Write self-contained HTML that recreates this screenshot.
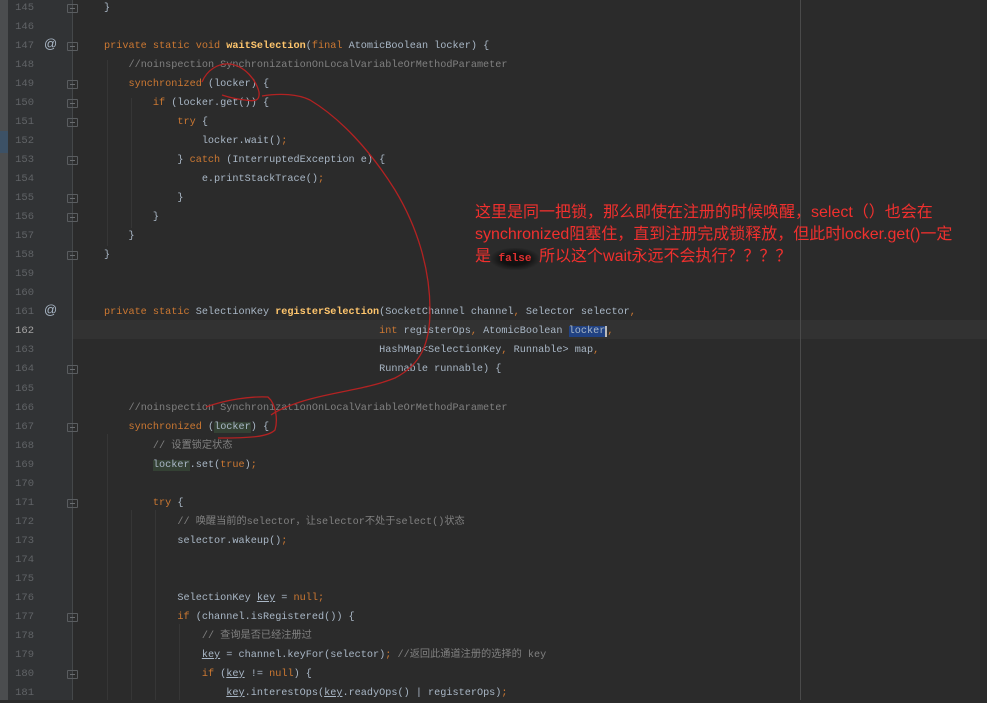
<!DOCTYPE html>
<html><head><meta charset="utf-8"><style>
body{margin:0;width:987px;height:700px;overflow:hidden;background:#2b2b2b;position:relative;font-family:"Liberation Mono","Noto Sans CJK SC",monospace;}
.strip{position:absolute;left:0;top:0;width:8px;height:700px;background:#4b4d4f}
.gut{position:absolute;left:8px;top:0;width:65px;height:700px;background:#313335}
.cur{position:absolute;left:73px;top:320px;width:914px;height:19px;background:#323232}
.margin{position:absolute;left:800px;top:0;width:1px;height:700px;background:#4a4a4a}
.ln{position:absolute;left:8px;width:26px;text-align:right;font-size:10.5px;color:#606366;height:19px;line-height:19px}
.code{position:absolute;left:104px;white-space:pre;font-size:10.2px;color:#a9b7c6;height:19px;line-height:19px}
.k{color:#cc7832}.c{color:#808080}.f{color:#ffc66d;font-weight:bold}.u{text-decoration:underline}
.hl{background:#344134}.sel{background:#214283;border-right:2px solid #bbb}
.fold{position:absolute;left:67px;width:11px;height:9px;border:1px solid #5a5d60;box-sizing:border-box;border-radius:1px}
.fold:after{content:"";position:absolute;left:2px;top:3px;width:5px;height:1px;background:#6a6d70}
.vl{position:absolute;left:72px;top:0;width:1px;height:700px;background:#45484a}
.at{position:absolute;left:44px;color:#a9b7c6;font-size:13px;font-family:"Liberation Sans",sans-serif}
.note{position:absolute;left:475px;color:#f0302e;font-family:"Liberation Sans","Noto Sans CJK SC",sans-serif;font-size:16px;line-height:22px;white-space:nowrap}
.ig{position:absolute;width:1px;background:#363636}
</style></head><body>
<div class="strip"></div><div style="position:absolute;left:0;top:131px;width:8px;height:22px;background:#3c5166"></div>
<div class="gut"></div><div class="vl"></div>
<div class="cur"></div>
<div class="margin"></div>
<div class="ig" style="left:107px;top:60px;height:186px"></div>
<div class="ig" style="left:131px;top:98px;height:130px"></div>
<div class="ig" style="left:107px;top:434px;height:266px"></div>
<div class="ig" style="left:131px;top:510px;height:190px"></div>
<div class="ig" style="left:155px;top:510px;height:190px"></div>
<div class="ig" style="left:179px;top:624px;height:76px"></div>
<div id="L"></div>
<div class="note" style="top:202px">这里是同一把锁，那么即使在注册的时候唤醒，select（）也会在</div>
<div class="note" style="top:224px">synchronized阻塞住，直到注册完成锁释放，但此时locker.get()一定</div>
<div class="note" style="top:246px">是<span style="display:inline-block;width:48px;background:radial-gradient(#111 40%,transparent 75%);font-family:'Liberation Mono';font-size:11px;font-weight:bold;color:#e03030;text-align:center">false</span>所以这个wait永远不会执行？？？？</div>
<svg style="position:absolute;left:0;top:0" width="987" height="700" fill="none" stroke="#b32222" stroke-width="1.3">
<path d="M202 82 C207 70 218 63 230 64 C245 66 256 80 259 92 C260 100 256 102 245 100 C235 99 228 97 222 95"/>
<path d="M262 96 C280 93 298 94 310 100 C340 118 370 150 395 190 C418 228 430 270 430 310 C430 345 420 365 395 378 C365 390 330 392 300 402 C288 406 278 410 271 415"/>
<path d="M206 407 C225 400 250 396 268 397 C276 404 278 420 275 430 C268 437 250 438 218 438"/>
</svg>
<script>
const lines={
145:'}',
146:'',
147:'<span class="k">private static void </span><span class="f">waitSelection</span>(<span class="k">final </span>AtomicBoolean locker) {',
148:'    <span class="c">//noinspection SynchronizationOnLocalVariableOrMethodParameter</span>',
149:'    <span class="k">synchronized </span>(locker) {',
150:'        <span class="k">if </span>(locker.get()) {',
151:'            <span class="k">try </span>{',
152:'                locker.wait()<span class="k">;</span>',
153:'            } <span class="k">catch </span>(InterruptedException e) {',
154:'                e.printStackTrace()<span class="k">;</span>',
155:'            }',
156:'        }',
157:'    }',
158:'}',
159:'',160:'',
161:'<span class="k">private static </span>SelectionKey <span class="f">registerSelection</span>(SocketChannel channel<span class="k">, </span>Selector selector<span class="k">,</span>',
162:'                                             <span class="k">int </span>registerOps<span class="k">, </span>AtomicBoolean <span class="sel">locker</span><span class="k">,</span>',
163:'                                             HashMap&lt;SelectionKey<span class="k">, </span>Runnable&gt; map<span class="k">,</span>',
164:'                                             Runnable runnable) {',
165:'',
166:'    <span class="c">//noinspection SynchronizationOnLocalVariableOrMethodParameter</span>',
167:'    <span class="k">synchronized </span>(<span class="hl">locker</span>) {',
168:'        <span class="c">// 设置锁定状态</span>',
169:'        <span class="hl">locker</span>.set(<span class="k">true</span>)<span class="k">;</span>',
170:'',
171:'        <span class="k">try </span>{',
172:'            <span class="c">// 唤醒当前的selector，让selector不处于select()状态</span>',
173:'            selector.wakeup()<span class="k">;</span>',
174:'',175:'',
176:'            SelectionKey <span class="u">key</span> = <span class="k">null;</span>',
177:'            <span class="k">if </span>(channel.isRegistered()) {',
178:'                <span class="c">// 查询是否已经注册过</span>',
179:'                <span class="u">key</span> = channel.keyFor(selector)<span class="k">; </span><span class="c">//返回此通道注册的选择的 key</span>',
180:'                <span class="k">if </span>(<span class="u">key</span> != <span class="k">null</span>) {',
181:'                    <span class="u">key</span>.interestOps(<span class="u">key</span>.readyOps() | registerOps)<span class="k">;</span>'
};
const folds=[145,147,149,150,151,153,155,156,158,164,167,171,177,180];
let h='';
for(let n=145;n<=181;n++){
 const t=Math.round((n-145)*19.05-3.5)+2;
 h+=`<div class="ln" style="top:${t}px${n==162?';color:#a4a3a3':''}">${n}</div>`;
 h+=`<div class="code" style="top:${t}px">${lines[n]}</div>`;
 if(folds.includes(n)) h+=`<div class="fold" style="top:${t+5}px"></div>`;
}
h+=`<div class="at" style="top:36px">@</div><div class="at" style="top:302px">@</div>`;
document.getElementById('L').innerHTML=h;
</script>
</body></html>
